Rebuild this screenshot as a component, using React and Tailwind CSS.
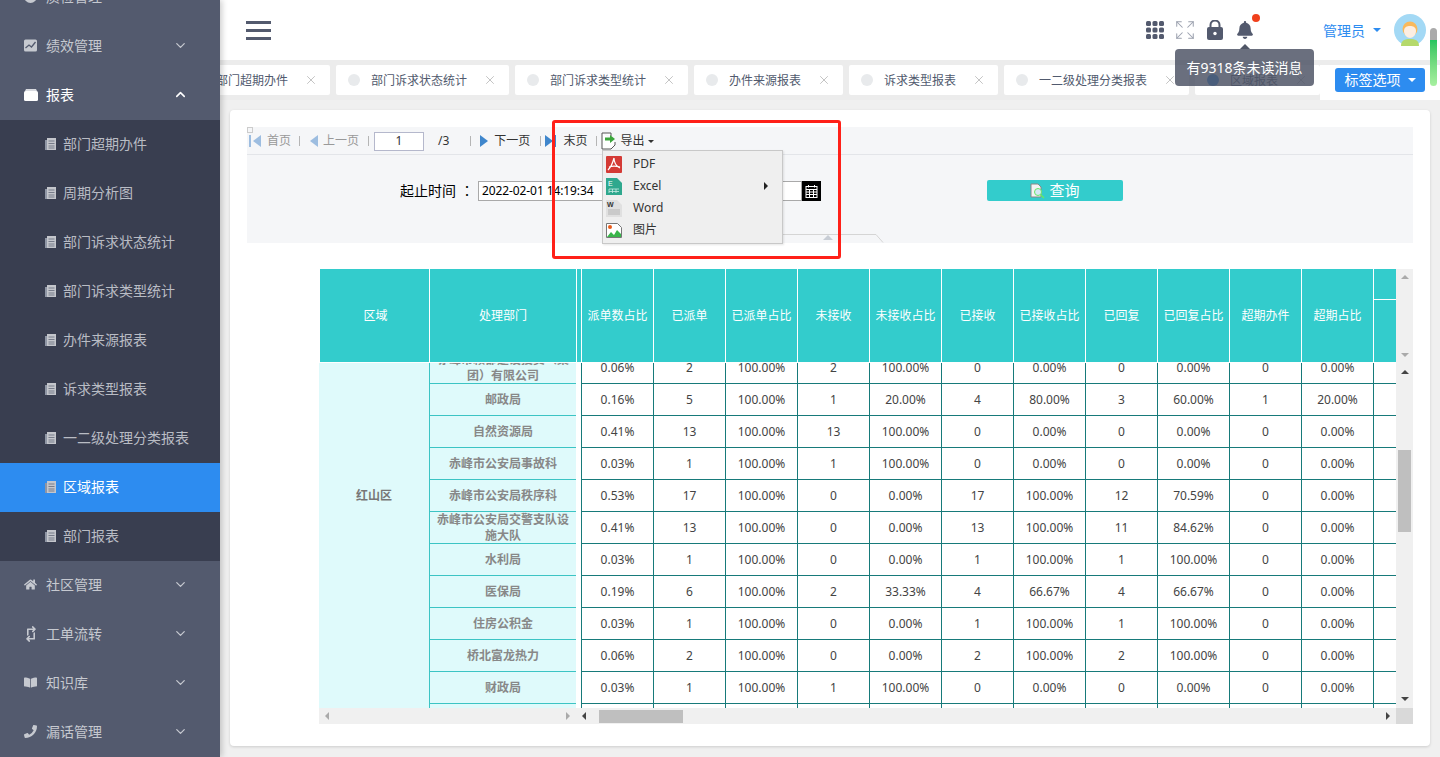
import { ChevronDown, ChevronUp, Expand, X } from "lucide-react";
import { FaBell, FaBookOpen, FaHome, FaPhoneAlt, FaRetweet } from "react-icons/fa";

const subMenus = [
  "部门超期办件",
  "周期分析图",
  "部门诉求状态统计",
  "部门诉求类型统计",
  "办件来源报表",
  "诉求类型报表",
  "一二级处理分类报表",
  "区域报表",
  "部门报表",
];

const tabs = [
  "部门超期办件",
  "部门诉求状态统计",
  "部门诉求类型统计",
  "办件来源报表",
  "诉求类型报表",
  "一二级处理分类报表",
  "区域报表",
];

const headers = [
  "派单数占比",
  "已派单",
  "已派单占比",
  "未接收",
  "未接收占比",
  "已接收",
  "已接收占比",
  "已回复",
  "已回复占比",
  "超期办件",
  "超期占比",
];

const rows = [
  ["赤峰市赖都建设投资（集团）有限公司", "0.06%", "2", "100.00%", "2", "100.00%", "0", "0.00%", "0", "0.00%", "0", "0.00%"],
  ["邮政局", "0.16%", "5", "100.00%", "1", "20.00%", "4", "80.00%", "3", "60.00%", "1", "20.00%"],
  ["自然资源局", "0.41%", "13", "100.00%", "13", "100.00%", "0", "0.00%", "0", "0.00%", "0", "0.00%"],
  ["赤峰市公安局事故科", "0.03%", "1", "100.00%", "1", "100.00%", "0", "0.00%", "0", "0.00%", "0", "0.00%"],
  ["赤峰市公安局秩序科", "0.53%", "17", "100.00%", "0", "0.00%", "17", "100.00%", "12", "70.59%", "0", "0.00%"],
  ["赤峰市公安局交警支队设施大队", "0.41%", "13", "100.00%", "0", "0.00%", "13", "100.00%", "11", "84.62%", "0", "0.00%"],
  ["水利局", "0.03%", "1", "100.00%", "0", "0.00%", "1", "100.00%", "1", "100.00%", "0", "0.00%"],
  ["医保局", "0.19%", "6", "100.00%", "2", "33.33%", "4", "66.67%", "4", "66.67%", "0", "0.00%"],
  ["住房公积金", "0.03%", "1", "100.00%", "0", "0.00%", "1", "100.00%", "1", "100.00%", "0", "0.00%"],
  ["桥北富龙热力", "0.06%", "2", "100.00%", "0", "0.00%", "2", "100.00%", "2", "100.00%", "0", "0.00%"],
  ["财政局", "0.03%", "1", "100.00%", "1", "100.00%", "0", "0.00%", "0", "0.00%", "0", "0.00%"],
  ["", "", "", "", "", "", "", "", "", "", "", ""],
];

const DocIcon = () => (
  <svg width="13" height="14" viewBox="0 0 13 14" className="shrink-0">
    <path d="M3 1h9v12H3z" fill="#c4c6cc" />
    <path d="M1 3h2v10H1z" fill="#8f96a5" />
    <path d="M4.500 4h6M4.500 6.500h6M4.500 9h6M4.500 11h6" stroke="#777c8a" strokeWidth="1" />
  </svg>
);

const MenuItem = ({ icon, label, open }) => (
  <div className={`flex h-[49px] shrink-0 items-center pb-[2px] pl-[24px] pr-[32px] text-[14px] ${open ? "text-white" : "text-[#c6c9d0]"}`}>
    <span className="flex w-[22px] shrink-0 justify-start">{icon}</span>
    <span className="flex-1">{label}</span>
    {open ? <ChevronUp size={15} strokeWidth={2.5} /> : <ChevronDown size={15} strokeWidth={2} />}
  </div>
);

const Sidebar = () => (
  <div className="z-10 h-[757px] w-[220px] shrink-0 overflow-hidden bg-[#535a6e] shadow-[2px_0_6px_rgba(0,0,0,0.2)]">
    <div className="-mt-[27px]">
      <MenuItem
        label="质检管理"
        icon={<span className="block h-[13px] w-[13px] rounded-full bg-[#c6c9d0]" />}
      />
      <MenuItem
        label="绩效管理"
        icon={
          <svg width="14" height="13" viewBox="0 0 14 13">
            <rect width="13" height="12" y="0.5" rx="1.5" fill="#c6c9d0" />
            <path d="M1.500 9l3.500-3 2.500 2 4-5" stroke="#535a6e" strokeWidth="1.3" fill="none" />
          </svg>
        }
      />
      <MenuItem
        open
        label="报表"
        icon={
          <svg width="14" height="12" viewBox="0 0 14 12">
            <path d="M2 0h10l1 2H1z" fill="#d8dae0" />
            <rect y="2" width="14" height="10" rx="1.5" fill="#fff" />
          </svg>
        }
      />
      <div className="bg-[#393e50]">
        {subMenus.map((name) => (
          <div
            key={name}
            className={`flex h-[49px] items-center pb-[2px] pl-[44px] text-[14px] ${name === "区域报表" ? "bg-[#2d8cf0] text-white" : "text-[#b9bcc4]"}`}
          >
            <DocIcon />
            <span className="ml-[6px]">{name}</span>
          </div>
        ))}
      </div>
      <MenuItem label="社区管理" icon={<FaHome size={13} />} />
      <MenuItem label="工单流转" icon={<FaRetweet size={16} className="-ml-px rotate-90" />} />
      <MenuItem label="知识库" icon={<FaBookOpen size={13} />} />
      <MenuItem label="漏话管理" icon={<FaPhoneAlt size={13} className="-scale-x-100" />} />
    </div>
  </div>
);

const TopBar = () => (
  <div className="flex h-[60px] items-center bg-white pl-[26px] pr-[14px]">
    <div className="flex w-[25px] flex-col gap-[5px]">
      <span className="h-[3px] bg-[#535a6e]" />
      <span className="h-[3px] bg-[#535a6e]" />
      <span className="h-[3px] bg-[#535a6e]" />
    </div>
    <div className="ml-auto flex items-center text-[#535a6e]">
      <svg width="18" height="18" viewBox="0 0 18 18" fill="currentColor">
        {[0, 6.5, 13].map((y) =>
          [0, 6.5, 13].map((x) => <rect key={`${x}-${y}`} x={x} y={y} width="5" height="5" rx="1.5" />)
        )}
      </svg>
      <Expand size={22} strokeWidth={1.1} className="ml-[10px] text-[#9aa0ad]" />
      <svg width="16" height="20" viewBox="0 0 16 20" className="ml-[11px]">
        <path d="M3.500 8V5a4.500 4.500 0 0 1 9 0v3" fill="none" stroke="currentColor" strokeWidth="2" />
        <rect y="7" width="16" height="13" rx="2" fill="currentColor" />
        <circle cx="8" cy="13.5" r="1.7" fill="#fff" />
      </svg>
      <div className="relative ml-[13px]">
        <FaBell size={18} />
        <span className="absolute -right-[6px] -top-[7px] h-[8px] w-[8px] rounded-full bg-[#f0401c]" />
      </div>
      <span className="ml-[69px] text-[14px] text-[#2d8cf0]">管理员</span>
      <span className="ml-[8px] h-0 w-0 border-x-[4px] border-t-[4px] border-x-transparent border-t-[#2d8cf0]" />
      <svg width="32" height="32" viewBox="0 0 32 32" className="ml-[13px]">
        <circle cx="16" cy="16" r="16" fill="#a3d9f5" />
        <path d="M7 32c0-6 4-7 9-7s9 1 9 7z" fill="#b5d96b" />
        <circle cx="16" cy="15" r="7.5" fill="#f9b95c" />
        <path d="M10 17c0-4 3-5 6-5s6 1 6 5c0 4-3 7-6 7s-6-3-6-7z" fill="#fdeee2" />
      </svg>
    </div>
  </div>
);

const TabBar = () => (
  <div className="flex h-[40px] bg-[#ececec] pt-[5px]">
    <div className="flex min-w-0 flex-1 gap-[6px] overflow-hidden">
      {tabs.map((name, i) => (
        <div
          key={name}
          className={`flex h-[30px] shrink-0 items-center rounded-[2px] bg-white pl-[12px] pr-[12px] text-[12px] text-[#515a6e] ${i === 0 ? "-ml-[39px]" : ""}`}
        >
          <span className={`h-[12px] w-[12px] rounded-full ${name === "区域报表" ? "bg-[#2d8cf0]" : "bg-[#e8eaec]"}`} />
          <span className="ml-[11px] pt-px">{name}</span>
          <X size={14} strokeWidth={1} className="ml-[16px] text-[#999]" />
        </div>
      ))}
    </div>
    <div className="flex h-[35px] w-[120px] shrink-0 items-start bg-white pl-[15px] pt-[3px]">
      <div className="flex h-[24px] w-[90px] items-center justify-center rounded-[3px] bg-[#2d8cf0] pb-[2px] text-[14px] text-white">
        标签选项
        <span className="ml-[7px] mt-[2px] h-0 w-0 border-x-[4px] border-t-[4px] border-x-transparent border-t-white" />
      </div>
    </div>
  </div>
);

const Sep = ({ ml }) => <span className={`h-[10px] w-px bg-[#b5b5b5] ${ml}`} />;

const Toolbar = () => (
  <div className="relative flex h-[28px] items-center border-b border-[#e3e5e9] pl-[2px] pt-px text-[12px] text-[#999]">
    <span className="absolute left-0 top-0 h-[6px] w-[6px] border border-[#ccc] bg-[#f5f6f8]" />
    <span className="h-[12px] w-[2px] bg-[#9dbde0]" />
    <span className="ml-[2px] h-0 w-0 border-y-[6px] border-r-[8px] border-y-transparent border-r-[#9dbde0]" />
    <span className="ml-[6px]">首页</span>
    <Sep ml="ml-[8px]" />
    <span className="ml-[10px] h-0 w-0 border-y-[6px] border-r-[8px] border-y-transparent border-r-[#9dbde0]" />
    <span className="ml-[5px]">上一页</span>
    <Sep ml="ml-[9px]" />
    <span className="ml-[5px] flex h-[19px] w-[50px] items-center justify-center border border-[#b5b8cc] bg-white text-[12px] text-[#333]">1</span>
    <span className="ml-[14px] text-[#333]">/3</span>
    <Sep ml="ml-[21px]" />
    <span className="ml-[9px] h-0 w-0 border-y-[6px] border-l-[8px] border-y-transparent border-l-[#3f86cc]" />
    <span className="ml-[6px] text-[#333]">下一页</span>
    <Sep ml="ml-[10px]" />
    <span className="ml-[4px] h-0 w-0 border-y-[6px] border-l-[8px] border-y-transparent border-l-[#3f86cc]" />
    <span className="ml-px h-[12px] w-[2px] bg-[#3f86cc]" />
    <span className="ml-[7px] text-[#333]">末页</span>
    <Sep ml="ml-[9px]" />
    <svg width="17" height="18" viewBox="0 0 17 18" className="ml-[4px]">
      <path d="M1 1h9v3M1 1v16h9l4-4V10" fill="#fff" stroke="#555" strokeWidth="1" />
      <path d="M4 5.500h5V3l5 4-5 4V8.500H4z" fill="#3aa53a" />
    </svg>
    <span className="ml-[2px] text-[#333]">导出</span>
    <span className="ml-[4px] h-0 w-0 border-x-[3px] border-t-[3px] border-x-transparent border-t-[#333]" />
  </div>
);

const ExportMenu = () => (
  <div className="absolute left-[355px] top-[23px] z-20 w-[181px] border border-[#c8c8c8] bg-[#efefef] py-[2px] text-[12px] text-[#333] shadow-[1px_1px_2px_rgba(0,0,0,0.1)]">
    <div className="flex h-[22px] items-center pl-[3px]">
      <svg width="16" height="17" viewBox="0 0 16 17">
        <rect width="16" height="17" rx="1" fill="#d43a35" />
        <path d="M8 2c-1 4-2 8-6 12M8 2c0 4 2 8 6 10M3 11c3-1 7-1 11 0" stroke="#fff" strokeWidth="1.2" fill="none" />
      </svg>
      <span className="ml-[11px]">PDF</span>
    </div>
    <div className="flex h-[22px] items-center pl-[3px]">
      <svg width="16" height="17" viewBox="0 0 16 17">
        <path d="M0 0h11l5 5v12H0z" fill="#2fa88e" />
        <text x="2" y="8" fontSize="7" fill="#fff" fontFamily="Liberation Sans">E</text>
        <path d="M3 11h10M3 13.500h10M3 11v4M6.500 11v4M10 11v4" stroke="#c8ebe4" strokeWidth="0.8" />
      </svg>
      <span className="ml-[11px]">Excel</span>
      <span className="ml-auto mr-[14px] h-0 w-0 border-y-[4px] border-l-[4px] border-y-transparent border-l-[#222]" />
    </div>
    <div className="flex h-[22px] items-center pl-[3px]">
      <svg width="16" height="17" viewBox="0 0 16 17">
        <path d="M0 0h11l5 5v12H0z" fill="#e0e0e0" />
        <text x="1" y="7" fontSize="7" fontWeight="bold" fill="#333" fontFamily="Liberation Sans">W</text>
        <path d="M2 10h12M2 12h12M2 14h12" stroke="#aaa" strokeWidth="0.8" />
      </svg>
      <span className="ml-[11px]">Word</span>
    </div>
    <div className="flex h-[22px] items-center pl-[3px]">
      <svg width="16" height="15" viewBox="0 0 16 15">
        <path d="M0.500 0.500h11l4 4v10h-15z" fill="#fff" stroke="#777" />
        <circle cx="4" cy="4" r="2" fill="#ea5b1a" />
        <path d="M1 14l4-5 3 3 3-5 4 4v3z" fill="#39b54a" />
      </svg>
      <span className="ml-[11px]">图片</span>
    </div>
  </div>
);

const ReportForm = () => (
  <div className="relative h-[116px] bg-[#f5f6f8]">
    <Toolbar />
    <div className="flex items-center pl-[153px] pt-[25px]">
      <span className="text-[14px] text-black">
        起止时间
        <span className="ml-[4px] font-['Noto_Sans_CJK_TC',sans-serif]">：</span>
      </span>
      <div className="ml-[4px] flex h-[20px] w-[324px] items-center border border-[#a9a9a9] bg-white pl-[3px] text-[12px] tracking-[-0.1px] text-black">
        2022-02-01 14:19:34
      </div>
      <div className="flex h-[20px] w-[19px] items-center justify-center bg-black">
        <svg width="13" height="14" viewBox="0 0 13 14" fill="none" stroke="#fff" strokeWidth="1">
          <rect x="1" y="2.500" width="11" height="11" />
          <path d="M1 5.500h11M1 8h11M1 10.500h11M4.500 5.500v8M8.500 5.500v8M3.500 1v2.500M9.500 1v2.500" />
        </svg>
      </div>
      <div className="ml-[166px] flex h-[21px] w-[136px] items-center justify-center rounded-[2px] bg-[#33cccc] text-[15px] text-white">
        <svg width="16" height="16" viewBox="0 0 16 16" className="mr-[3px]">
          <path d="M1 1h7l3 3v10H1z" fill="#f3f3f3" stroke="#888" />
          <circle cx="8" cy="9" r="3.500" fill="#d5e8f5" stroke="#66e866" />
          <path d="M10.500 11.500L14 15" stroke="#66e866" strokeWidth="1.500" />
        </svg>
        查询
      </div>
    </div>
    <svg width="110" height="9" viewBox="0 0 110 9" className="absolute left-[527px] top-[107px]">
      <path d="M0 8.500L8 0.500h94l7 8" fill="#f5f6f8" stroke="#d5d5d5" />
      <path d="M49 6l5-5 5 5z" fill="#c8cdd5" />
    </svg>
    <ExportMenu />
  </div>
);

const Arrow = ({ className }) => <span className={`h-0 w-0 shrink-0 ${className}`} />;

const TableHeader = () => (
  <div className="flex h-[94px] border-b border-white bg-[#33cccc] text-[12px] text-white">
    <div className="flex w-[110px] items-center justify-center border-r border-white pl-[2px]">区域</div>
    <div className="flex w-[147px] items-center justify-center border-r border-white">处理部门</div>
    <div className="w-[5px] border-r border-white" />
    {headers.map((h) => (
      <div key={h} className="flex w-[72px] items-center justify-center border-r border-white">
        {h}
      </div>
    ))}
    <div className="flex flex-1 flex-col">
      <div className="h-[31px] border-b border-white" />
    </div>
  </div>
);

const TableBody = () => (
  <div className="-ml-px flex h-[345px] overflow-hidden text-[12px]">
    <div className="w-[111px] shrink-0 border-r border-[#3cc4c4] bg-[#dffafb] pt-[124px] text-center font-bold text-[#777]">
      红山区
    </div>
    <div className="-mt-[11px] w-[146px] shrink-0">
      {rows.map((row, i) => (
        <div
          key={i}
          className="flex h-[32px] items-center justify-center border-b border-[#3cc4c4] bg-[#dffafb] px-[7px] text-center font-bold leading-[16px] text-[#888]"
        >
          {row[0]}
        </div>
      ))}
    </div>
    <div className="w-[5px] shrink-0" />
    <div className="-mt-[11px] min-w-0 flex-1 border-l border-[#177a7a]">
      {rows.map((row, i) => (
        <div key={i} className="flex h-[32px] border-b border-[#177a7a] text-[#444]">
          {row.slice(1).map((v, j) => (
            <div key={j} className="flex w-[72px] shrink-0 items-center justify-center border-r border-[#177a7a]">
              {v}
            </div>
          ))}
        </div>
      ))}
    </div>
  </div>
);

const VScroll = () => (
  <div className="flex w-[17px] shrink-0 flex-col bg-[#f0f0f0]">
    <div className="flex h-[94px] flex-col items-center justify-between py-[6px]">
      <Arrow className="border-x-[4px] border-b-[4px] border-x-transparent border-b-[#aaa]" />
      <Arrow className="border-x-[4px] border-t-[4px] border-x-transparent border-t-[#aaa]" />
    </div>
    <div className="flex flex-1 flex-col items-center pt-[7px]">
      <Arrow className="border-x-[4px] border-b-[4px] border-x-transparent border-b-[#444]" />
      <div className="mt-[76px] h-[82px] w-[13px] bg-[#bfbfbf]" />
      <Arrow className="mt-[165px] border-x-[4px] border-t-[4px] border-x-transparent border-t-[#444]" />
    </div>
    <div className="h-[16px] bg-[#d9d9d9]" />
  </div>
);

const HScroll = () => (
  <div className="-ml-px flex h-[16px] items-center bg-[#f0f0f0]">
    <Arrow className="ml-[6px] border-y-[4px] border-r-[4px] border-y-transparent border-r-[#aaa]" />
    <Arrow className="ml-[237px] border-y-[4px] border-l-[4px] border-y-transparent border-l-[#aaa]" />
    <Arrow className="ml-[12px] border-y-[4px] border-r-[4px] border-y-transparent border-r-[#444]" />
    <div className="ml-[13px] h-[13px] w-[84px] bg-[#bfbfbf]" />
    <Arrow className="ml-auto mr-[6px] border-y-[4px] border-l-[4px] border-y-transparent border-l-[#444]" />
  </div>
);

export default function App() {
  return (
    <div className="relative flex h-[757px] w-[1440px] overflow-hidden bg-[#f0f0f0] font-['Noto_Sans','Noto_Sans_CJK_SC',sans-serif]">
      <Sidebar />
      <div className="min-w-0 flex-1">
        <TopBar />
        <TabBar />
        <div className="mx-[10px] mt-[10px] h-[636px] rounded-[4px] bg-white px-[17px] pt-[17px] shadow-[0_1px_3px_rgba(0,0,0,0.15)]">
          <ReportForm />
          <div className="ml-[73px] mt-[26px] flex">
            <div className="min-w-0 flex-1">
              <TableHeader />
              <TableBody />
              <HScroll />
            </div>
            <VScroll />
          </div>
        </div>
      </div>

      {/* tooltip of the bell */}
      <div className="absolute left-[1175px] top-[49px] z-30 flex h-[37px] w-[139px] items-center justify-center rounded-[4px] bg-[#505667]/85 text-[14px] text-white">
        <span className="absolute -top-[5px] left-[65px] h-0 w-0 border-x-[5px] border-b-[5px] border-x-transparent border-b-[#505667]" />
        有9318条未读消息
      </div>

      {/* red annotation box */}
      <div className="absolute left-[552px] top-[120px] z-30 h-[139px] w-[289px] rounded-[3px] border-[3px] border-[#ff2018]" />

      {/* page scroll marker */}
      <div className="absolute left-[1430px] top-[28px] z-30 flex h-[58px] w-[7px] flex-col overflow-hidden rounded-full">
        <div className="h-[12px] bg-[#aaaaaa]" />
        <div className="flex-1 bg-gradient-to-b from-[#22c55e] to-[#a7f0a0]" />
      </div>
    </div>
  );
}
